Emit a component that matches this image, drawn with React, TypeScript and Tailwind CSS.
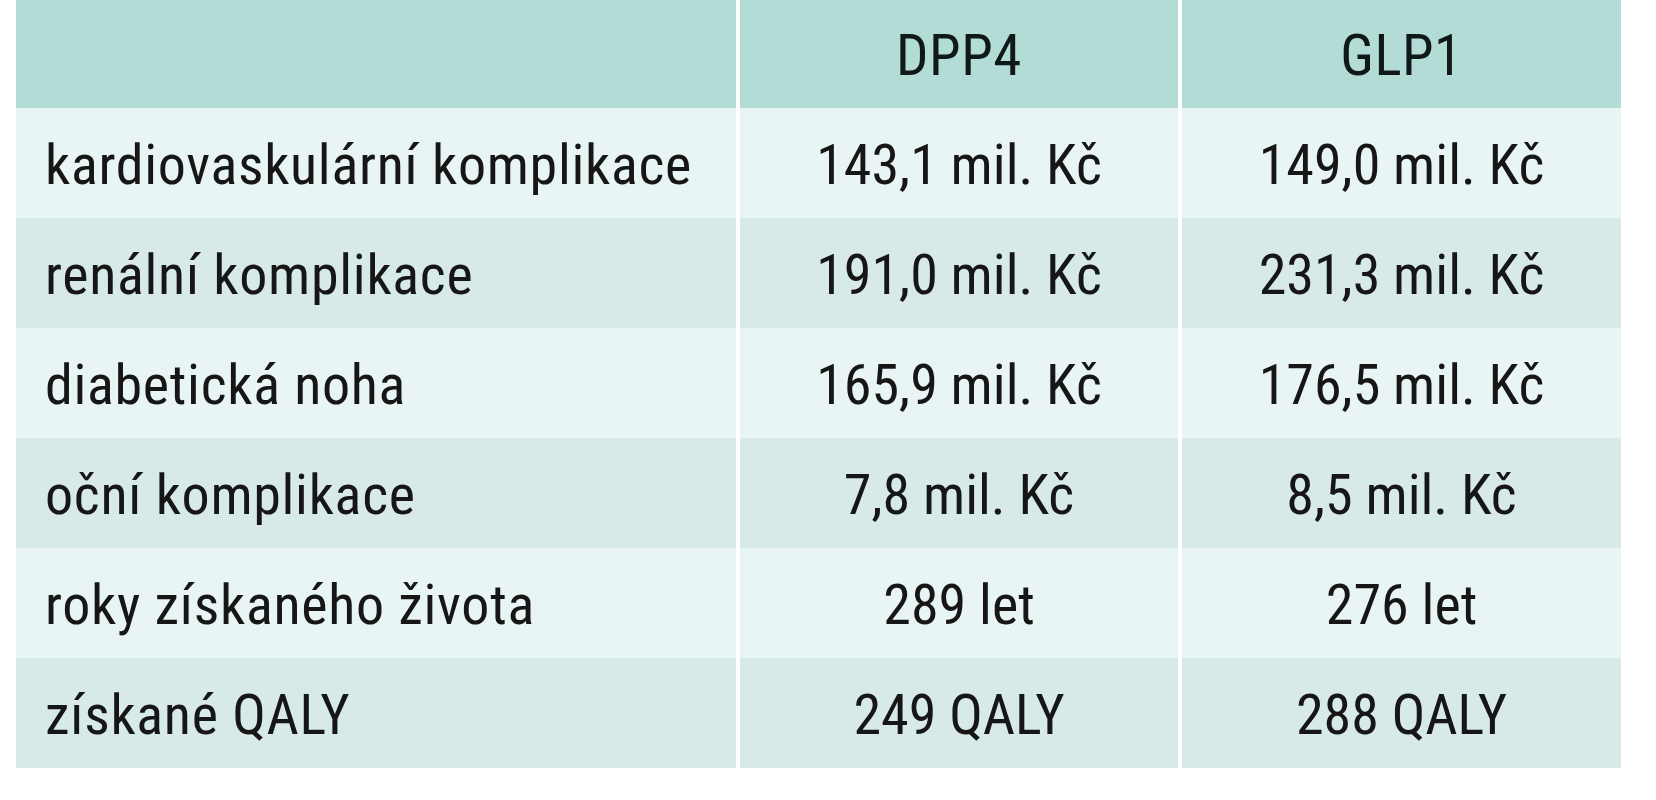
import React from 'react';

interface Row {
  label: string;
  dpp4: string;
  glp1: string;
}

const ROWS: Row[] = [
  { label: 'kardiovaskulární komplikace', dpp4: '143,1 mil. Kč', glp1: '149,0 mil. Kč' },
  { label: 'renální komplikace', dpp4: '191,0 mil. Kč', glp1: '231,3 mil. Kč' },
  { label: 'diabetická noha', dpp4: '165,9 mil. Kč', glp1: '176,5 mil. Kč' },
  { label: 'oční komplikace', dpp4: '7,8 mil. Kč', glp1: '8,5 mil. Kč' },
  { label: 'roky získaného života', dpp4: '289 let', glp1: '276 let' },
  { label: 'získané QALY', dpp4: '249 QALY', glp1: '288 QALY' },
];

export default function App() {
  return (
    <div className="w-full h-[800px] bg-white pl-[16px] font-['Roboto_Condensed','Liberation_Sans',sans-serif] text-[#161616]">
      <div className="grid grid-cols-[720px_438px_439px] gap-x-[4px] w-fit">
        {/* header */}
        <div className="h-[108px] bg-[#b3dcd7]" />
        <div className="h-[108px] bg-[#b3dcd7] flex items-center justify-center text-[57px] tracking-[0.5px] pt-[4px] text-[#0f1a18]">DPP4</div>
        <div className="h-[108px] bg-[#b3dcd7] flex items-center justify-center text-[57px] tracking-[0.5px] pt-[4px] text-[#0f1a18]">GLP1</div>

        {ROWS.map((row, i) => {
          const bg = i % 2 === 0 ? 'bg-[#e9f5f4]' : 'bg-[#d7eae9]';
          return (
            <React.Fragment key={row.label}>
              <div className={`h-[110px] ${bg} flex items-center pl-[29px] pt-[3px] text-[56px] tracking-[0.7px] whitespace-nowrap`}>
                {row.label}
              </div>
              <div className={`h-[110px] ${bg} flex items-center justify-center pt-[3px] text-[56px] whitespace-nowrap`}>
                {row.dpp4}
              </div>
              <div className={`h-[110px] ${bg} flex items-center justify-center pt-[3px] text-[56px] whitespace-nowrap`}>
                {row.glp1}
              </div>
            </React.Fragment>
          );
        })}
      </div>
    </div>
  );
}
